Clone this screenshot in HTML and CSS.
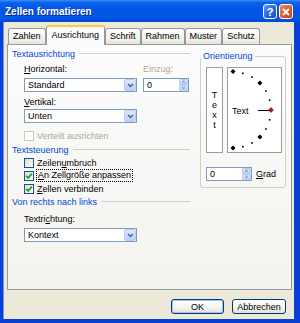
FILE: index.html
```html
<!DOCTYPE html>
<html lang="de">
<head>
    <meta charset="UTF-8">
    <title>Zellen formatieren</title>
    <link rel="stylesheet" href="styles.css">
</head>
<body>

    <!-- Dialog window -->
    <div class="window">
        <div class="titlebar">
            <span class="title">Zellen formatieren</span>
            <div class="caption-buttons">
                <span class="cap-btn help">?</span>
                <span class="cap-btn close">
                    <svg width="8" height="8" viewBox="0 0 8 8"><path d="M1 1 L7 7 M7 1 L1 7" stroke="#fff" stroke-width="1.8"/></svg>
                </span>
            </div>
        </div>

        <div class="client">
            <!-- Tab strip -->
            <div class="tabs">
                <span class="tab">Zahlen</span>
                <span class="tab active">Ausrichtung</span>
                <span class="tab">Schrift</span>
                <span class="tab">Rahmen</span>
                <span class="tab">Muster</span>
                <span class="tab">Schutz</span>
            </div>

            <div class="panel">
                <div class="col-left">
                    <div class="group-head"><span>Textausrichtung</span></div>
                    <div class="indent">
                        <div class="pair">
                            <div class="field">
                                <label class="lbl"><u>H</u>orizontal:</label>
                                <div class="combo"><span class="combo-text">Standard</span><span class="combo-btn"><svg width="7" height="5" viewBox="0 0 7 5"><path d="M1 1 L3.5 3.5 L6 1" stroke="#4d6185" stroke-width="1.5" fill="none"/></svg></span></div>
                            </div>
                            <div class="field">
                                <label class="lbl disabled">Einzug:</label>
                                <div class="spin"><span class="spin-text">0</span><span class="spin-btns"><span class="spin-btn">&#708;</span><span class="spin-btn">&#709;</span></span></div>
                            </div>
                        </div>
                        <label class="lbl lbl-v"><u>V</u>ertikal:</label>
                        <div class="combo"><span class="combo-text">Unten</span><span class="combo-btn"><svg width="7" height="5" viewBox="0 0 7 5"><path d="M1 1 L3.5 3.5 L6 1" stroke="#4d6185" stroke-width="1.5" fill="none"/></svg></span></div>
                        <div class="check-row first disabled"><span class="check off"></span><span>Verteilt ausrichten</span></div>
                    </div>

                    <div class="group-head"><span>Textsteuerung</span></div>
                    <div class="indent">
                        <div class="check-row"><span class="check"></span><span>Zeilen<u>u</u>mbruch</span></div>
                        <div class="check-row"><span class="check"><svg width="8" height="8" viewBox="0 0 8 8"><path d="M1.2 3.8 L3.2 5.9 L6.9 1.6" stroke="#21a121" stroke-width="1.7" fill="none"/></svg></span><span class="focus"><u>A</u>n Zellgröße anpassen</span></div>
                        <div class="check-row"><span class="check"><svg width="8" height="8" viewBox="0 0 8 8"><path d="M1.2 3.8 L3.2 5.9 L6.9 1.6" stroke="#21a121" stroke-width="1.7" fill="none"/></svg></span><span><u>Z</u>ellen verbinden</span></div>
                    </div>

                    <div class="group-head"><span>Von rechts nach links</span></div>
                    <div class="indent">
                        <label class="lbl lbl-dir">Textri<u>c</u>htung:</label>
                        <div class="combo"><span class="combo-text">Kontext</span><span class="combo-btn"><svg width="7" height="5" viewBox="0 0 7 5"><path d="M1 1 L3.5 3.5 L6 1" stroke="#4d6185" stroke-width="1.5" fill="none"/></svg></span></div>
                    </div>
                </div>

                <!-- Orientation group -->
                <fieldset class="orient">
                    <legend>Orientierung</legend>
                    <div class="orient-boxes">
                        <div class="vtext"><span>T</span><span>e</span><span>x</span><span>t</span></div>
                        <div class="dial">
                            <svg width="53" height="84" viewBox="0 0 53 84">
                                <polygon points="5,1 7.5,3.5 5,6 2.5,3.5" fill="#000"/>
                                <rect x="14" y="4.5" width="1.6" height="1.6" fill="#000"/>
                                <rect x="23.2" y="8.3" width="1.6" height="1.6" fill="#000"/>
                                <polygon points="31.9,12.6 34.4,15.1 31.9,17.6 29.4,15.1" fill="#000"/>
                                <rect x="37.1" y="22.2" width="1.6" height="1.6" fill="#000"/>
                                <rect x="40.9" y="31.4" width="1.6" height="1.6" fill="#000"/>
                                <line x1="30" y1="42.5" x2="41" y2="42.5" stroke="#000" stroke-width="1"/>
                                <polygon points="43,39.5 45.5,42 43,44.5 40.5,42" fill="#b0141c" stroke="#600" stroke-width="0.5"/>
                                <rect x="40.9" y="51" width="1.6" height="1.6" fill="#000"/>
                                <rect x="37.1" y="60.2" width="1.6" height="1.6" fill="#000"/>
                                <polygon points="31.9,66.4 34.4,68.9 31.9,71.4 29.4,68.9" fill="#000"/>
                                <rect x="23.2" y="74.1" width="1.6" height="1.6" fill="#000"/>
                                <rect x="14" y="77.9" width="1.6" height="1.6" fill="#000"/>
                                <polygon points="5,77.5 7.5,80 5,82.5 2.5,80" fill="#000"/>
                                <text x="4" y="45.5" font-family="Liberation Sans, Arial, sans-serif" font-size="9">Text</text>
                            </svg>
                        </div>
                    </div>
                    <div class="degree">
                        <div class="spin"><span class="spin-text">0</span><span class="spin-btns"><span class="spin-btn">&#708;</span><span class="spin-btn">&#709;</span></span></div>
                        <label class="lbl"><u>G</u>rad</label>
                    </div>
                </fieldset>
            </div>

            <!-- Dialog buttons -->
            <div class="actions">
                <button class="btn default">OK</button>
                <button class="btn">Abbrechen</button>
            </div>
        </div>
    </div>

</body>
</html>
```

FILE: styles.css
```css
html, body {
    margin: 0;
    padding: 0;
}

body {
    width: 300px;
    height: 323px;
    overflow: hidden;
    font-family: "Liberation Sans", Arial, sans-serif;
    font-size: 9px;
    color: #000;
}

/* XP style window frame */
.window {
    width: 300px;
    height: 323px;
    background: #0841d4;
    display: flex;
    flex-direction: column;
}

.titlebar {
    height: 22px;
    flex: none;
    box-sizing: border-box;
    padding: 0 7px 0 5px;
    display: flex;
    align-items: center;
    background: linear-gradient(#3c8cf8 0%, #0b61ea 12%, #0055e5 45%, #0258ea 80%, #0347cf 100%);
}

.title {
    flex: 1;
    color: #fff;
    font-weight: bold;
    font-size: 10px;
    text-shadow: 1px 1px #0c2a8c;
}

.caption-buttons {
    display: flex;
    gap: 2px;
    margin-top: 1px;
}

.cap-btn {
    width: 14px;
    height: 15px;
    box-sizing: border-box;
    border: 1px solid #fff;
    border-radius: 3px;
    display: flex;
    align-items: center;
    justify-content: center;
    color: #fff;
    font-weight: bold;
    font-size: 11px;
}

.cap-btn.help {
    background: linear-gradient(135deg, #5c97f6, #2663de 60%, #1c52c8);
}

.cap-btn.close {
    background: linear-gradient(135deg, #f08a66, #e1532d 60%, #c8401f);
}

.client {
    flex: 1;
    margin: 0 6px 4px 3px;
    padding: 3px 2px 0 4px;
    background: #ece9d8;
    box-shadow: inset 1px 0 #6d95ef;
}

/* Tabs */
.tabs {
    display: flex;
    align-items: flex-end;
    height: 19px;
    padding-left: 1px;
    position: relative;
    z-index: 1;
}

.tab {
    height: 16px;
    line-height: 15px;
    box-sizing: border-box;
    padding: 0 4px;
    border: 1px solid #919b9c;
    border-bottom: none;
    border-radius: 3px 3px 0 0;
    background: linear-gradient(#fefefe, #f1f0ea 70%, #e6e4da);
}

.tab.active {
    height: 20px;
    margin-bottom: -1px;
    padding: 0 5px;
    line-height: 17px;
    border-top: 2px solid #ffc83c;
    background: #fcfcfe;
}

.panel {
    height: 246px;
    box-sizing: border-box;
    border: 1px solid #919b9c;
    background: linear-gradient(#fcfcfe, #f4f3ee);
    display: flex;
    gap: 10px;
    padding: 2px 0 0 4px;
}

.col-left {
    width: 178px;
}

.group-head {
    display: flex;
    align-items: center;
    gap: 4px;
    height: 13px;
    color: #0046d5;
}

.group-head::after {
    content: "";
    flex: 1;
    height: 1px;
    background: #d0d0bf;
}

.indent {
    padding-left: 12px;
}

.pair {
    display: flex;
    gap: 6px;
}

.lbl {
    display: block;
    line-height: 12px;
}

.field .lbl {
    margin-top: 3px;
    margin-bottom: 3px;
}

.lbl.disabled {
    color: #aca899;
}

.lbl-v {
    margin-top: 4px;
    margin-bottom: 1px;
}

.lbl-dir {
    margin-top: 5px;
    margin-bottom: 3px;
}

/* Combo box */
.combo {
    display: flex;
    align-items: center;
    width: 113px;
    height: 14px;
    box-sizing: border-box;
    border: 1px solid #7f9db9;
    background: #fff;
}

.combo-text {
    flex: 1;
    padding-left: 3px;
}

.combo-btn {
    width: 12px;
    height: 12px;
    box-sizing: border-box;
    border: 1px solid #b9cbf3;
    border-radius: 2px;
    background: linear-gradient(#dde8fd, #bccff8);
    display: flex;
    align-items: center;
    justify-content: center;
}

/* Spin box */
.spin {
    display: flex;
    align-items: center;
    width: 46px;
    height: 14px;
    box-sizing: border-box;
    border: 1px solid #7f9db9;
    background: #fff;
}

.spin-text {
    flex: 1;
    padding-left: 3px;
}

.spin-btns {
    display: flex;
    flex-direction: column;
    width: 9px;
    height: 12px;
}

.spin-btn {
    flex: 1;
    box-sizing: border-box;
    border: 1px solid #b9cbf3;
    border-radius: 1px;
    background: linear-gradient(#dde8fd, #bccff8);
    color: #4d6185;
    font-size: 6px;
    line-height: 5px;
    text-align: center;
    overflow: hidden;
}

/* Check boxes */
.check-row {
    display: flex;
    align-items: center;
    gap: 3px;
    height: 13px;
}

.check-row.first {
    margin-top: 6px;
    margin-bottom: 1px;
}

.check-row.disabled {
    color: #aca899;
}

.check {
    width: 10px;
    height: 10px;
    box-sizing: border-box;
    border: 1px solid #1c5180;
    background: linear-gradient(135deg, #dcdcd7, #fff);
    display: flex;
    align-items: center;
    justify-content: center;
}

.check.off {
    border-color: #cac8bb;
    background: #fff;
}

.focus {
    outline: 1px dotted #000;
    padding: 0 1px;
    line-height: 11px;
}

/* Orientation */
.orient {
    width: 86px;
    box-sizing: border-box;
    margin: 3px 0 0 0;
    padding: 0 2px 6px 5px;
    border: 1px solid #d0d0bf;
    border-radius: 3px;
    align-self: flex-start;
}

.orient legend {
    color: #0046d5;
    line-height: 12px;
    padding: 0 2px;
    margin-left: -5px;
}

.orient-boxes {
    display: flex;
    gap: 4px;
    margin-top: 5px;
}

.vtext,
.dial {
    height: 86px;
    box-sizing: border-box;
    border: 1px solid #9c9c9c;
    background: #fff;
}

.vtext {
    width: 17px;
    display: flex;
    flex-direction: column;
    align-items: center;
    justify-content: center;
    line-height: 10px;
}

.dial {
    width: 55px;
}

.dial svg {
    display: block;
}

.degree {
    display: flex;
    align-items: center;
    gap: 4px;
    margin-top: 14px;
}

/* Dialog buttons */
.actions {
    display: flex;
    justify-content: flex-end;
    gap: 8px;
    padding: 9px 6px 0 0;
}

.btn {
    height: 15px;
    box-sizing: border-box;
    padding: 0;
    border: 1px solid #003c74;
    border-radius: 3px;
    background: linear-gradient(#fff, #f4f3ee 60%, #e3e1d5);
    font-family: "Liberation Sans", Arial, sans-serif;
    font-size: 9px;
    color: #000;
}

.btn.default {
    width: 53px;
    box-shadow: inset 0 0 0 1px #a6c5f7;
}

.btn:not(.default) {
    width: 54px;
}
```
